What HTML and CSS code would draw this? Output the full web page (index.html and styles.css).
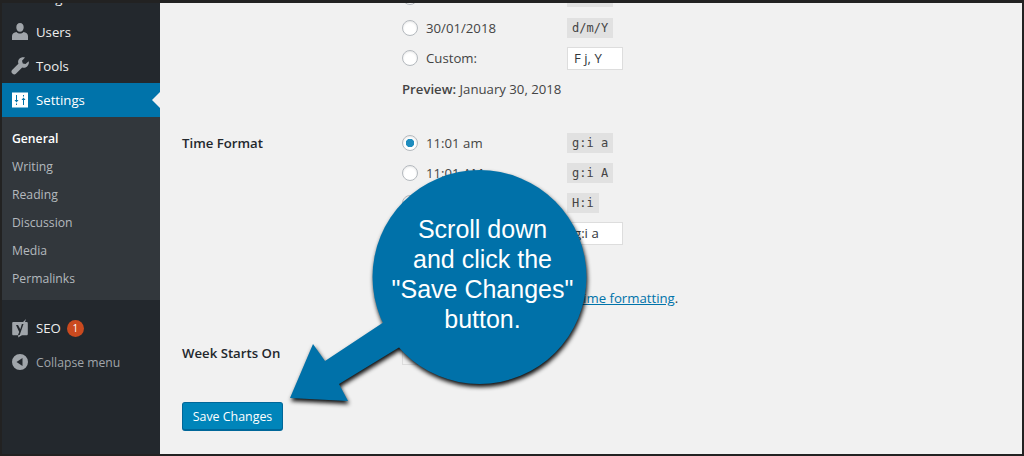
FILE: index.html
```html
<!DOCTYPE html>
<html lang="en">
<head>
  <meta name="viewport" content="width=device-width, initial-scale=1.0">
  <title>General Settings</title>
  <link rel="stylesheet" href="styles.css">
</head>
<body>
  <div class="frame">
    <nav class="sidebar">
      <a class="menu-item">
        <svg class="menu-icon" viewBox="0 0 20 20"><path d="M3 4l4-1 8 6 2 4-3 1-3-3-8-3z"/></svg>
        <span>Plugins</span>
      </a>
      <a class="menu-item">
        <svg class="menu-icon" viewBox="0 0 20 20"><path d="M10 1c2.300 0 3.700 1.800 3.700 4.200S12.300 9.800 10 9.800 6.300 7.600 6.300 5.200 7.700 1 10 1zM6.500 10c1 1 2.200 1.500 3.500 1.500s2.500-.5 3.500-1.500c2.500.5 4.500 1.700 4.500 4v4H2v-4c0-2.300 2-3.500 4.500-4z"/></svg>
        <span>Users</span>
      </a>
      <a class="menu-item">
        <svg class="menu-icon" viewBox="0 0 20 20"><path d="M18.700 5.200l-3.200 2.900-2.700-.7-.8-2.600L15 1.600c-2-.7-4.200-.3-5.600 1.200-1.300 1.300-1.600 3.200-1 4.900l-6.300 6.300c-.9.900-.9 2.300 0 3.200l.6.600c.9.900 2.300.9 3.200 0l6.300-6.300c1.700.6 3.600.2 4.900-1.100 1.400-1.400 2.200-3.300 1.600-5.200z"/></svg>
        <span>Tools</span>
      </a>
      <a class="menu-item menu-current">
        <svg class="menu-icon" viewBox="0 0 20 20"><path fill-rule="evenodd" d="M2 2.500h16v15H2zM6 5v5H4.500l2 2.500 2-2.500H7V5zM6 13.500V15h1v-1.500zM13 5v1.500h1V5zM13.500 7.500l-2 2.500H13v5h1v-5h1.500z"/></svg>
        <span>Settings</span>
      </a>
      <ul class="submenu">
        <li class="submenu-current">General</li>
        <li>Writing</li>
        <li>Reading</li>
        <li>Discussion</li>
        <li>Media</li>
        <li>Permalinks</li>
      </ul>
      <a class="menu-item menu-seo">
        <svg class="menu-icon" viewBox="0 0 20 20"><path fill-rule="evenodd" d="M3.500 4H13l3-3-1 3h1.500c.8 0 1.300.5 1.300 1.300V16c0 .8-.5 1.300-1.300 1.300H12L8 19.500l.5-2.200H3.500c-.8 0-1.300-.5-1.300-1.300V5.300C2.200 4.500 2.700 4 3.500 4zM6 7l3.200 7-1.200 3h1.700l3.800-11h-1.600l-1.600 5.300L8 7z"/></svg>
        <span>SEO</span>
        <span class="badge">1</span>
      </a>
      <a class="menu-item menu-collapse">
        <svg class="menu-icon" viewBox="0 0 20 20"><path fill-rule="evenodd" d="M10 2a8 8 0 1 1 0 16 8 8 0 0 1 0-16zM12.500 6l-6 4 6 4z"/></svg>
        <span>Collapse menu</span>
      </a>
    </nav>

    <main class="content">
      <div class="form-row date-row">
        <div class="form-label">Date Format</div>
        <div class="form-field">
          <label class="choice"><input type="radio"><span class="choice-text">01/30/2018</span><code>m/d/Y</code></label>
          <label class="choice"><input type="radio"><span class="choice-text">30/01/2018</span><code>d/m/Y</code></label>
          <label class="choice"><input type="radio"><span class="choice-text">Custom:</span><input class="small-text" type="text" value="F j, Y"></label>
          <p class="preview"><b>Preview:</b> January 30, 2018</p>
        </div>
      </div>

      <div class="form-row time-row">
        <div class="form-label">Time Format</div>
        <div class="form-field">
          <label class="choice"><input type="radio" checked><span class="choice-text">11:01 am</span><code>g:i a</code></label>
          <label class="choice"><input type="radio"><span class="choice-text">11:01 AM</span><code>g:i A</code></label>
          <label class="choice"><input type="radio"><span class="choice-text">11:01</span><code>H:i</code></label>
          <label class="choice"><input type="radio"><span class="choice-text">Custom:</span><input class="small-text" type="text" value="g:i a"></label>
          <p class="preview"><b>Preview:</b> 11:01 am</p>
          <p class="doc-link"><a>Documentation on date and time formatting</a>.</p>
        </div>
      </div>

      <div class="form-row week-row">
        <div class="form-label">Week Starts On</div>
        <div class="form-field"><span class="select-box"></span></div>
      </div>

      <button class="save-btn">Save Changes</button>
    </main>

    <div class="callout">
      <svg class="callout-shape" viewBox="0 0 1024 456">
        <g>
          <circle cx="479.500" cy="277" r="107"/>
          <path d="M313 344l12 17 62-41 16 25-64 39 9 17-58-3z"/>
        </g>
      </svg>
      <p class="callout-text">Scroll down<br>and click the<br>"Save Changes"<br>button.</p>
    </div>
  </div>
</body>
</html>
```

FILE: styles.css
```css
* {
  box-sizing: border-box;
}
html, body {
  margin: 0;
  height: 100%;
}
body {
  font-family: "Open Sans", sans-serif;
  font-size: 13.200px;
  color: #444;
  overflow: hidden;
}
.frame {
  position: relative;
  display: flex;
  width: 1024px;
  height: 456px;
  overflow: hidden;
  background-color: #f1f1f1;
  border: 2px solid #222;
  border-top-width: 3px;
}

/* sidebar */
.sidebar {
  width: 158px;
  flex: none;
  margin-top: -22px;
  background-color: #23282d;
  color: #eee;
}
.menu-item {
  display: flex;
  align-items: center;
  height: 34px;
  padding-left: 8px;
  gap: 6px;
}
.menu-icon {
  width: 20px;
  height: 20px;
  fill: #a0a5aa;
}
.menu-current {
  position: relative;
  background-color: #0073aa;
  color: #fff;
}
.menu-current .menu-icon {
  fill: #fff;
}
.menu-current::after {
  content: "";
  position: absolute;
  right: 0;
  top: 9px;
  border: 8px solid transparent;
  border-right-color: #f1f1f1;
  border-left-width: 0;
}
.submenu {
  list-style: none;
  margin: 0 0 11px;
  padding: 8px 0;
  height: 183px;
  background-color: #32373c;
  color: #b4b9be;
  font-size: 12.200px;
}
.submenu li {
  height: 28px;
  line-height: 28px;
  padding-left: 10px;
}
.submenu-current {
  color: #fff;
  font-weight: 600;
}
.badge {
  width: 17px;
  height: 17px;
  border-radius: 50%;
  background-color: #ca4a1f;
  color: #fff;
  font-size: 10px;
  line-height: 17px;
  text-align: center;
}
.menu-collapse {
  color: #a0a5aa;
  font-size: 12.200px;
}

/* settings form */
.content {
  flex: 1;
  margin-top: -21px;
  padding-left: 22px;
}
.form-row {
  display: grid;
  grid-template-columns: 220px 1fr;
}
.form-label {
  color: #23282d;
  font-weight: 600;
  line-height: 30px;
}
.date-row .form-label {
  visibility: hidden;
}
.choice {
  display: flex;
  align-items: center;
  height: 30.500px;
}
.time-row .choice {
  height: 30px;
}
.choice input[type="radio"] {
  appearance: none;
  width: 16px;
  height: 16px;
  margin: 0 8px 0 0;
  flex: none;
  background-color: #fff;
  border: 1px solid #b4b9be;
  border-radius: 50%;
  box-shadow: inset 0 1px 2px rgba(0, 0, 0, 0.1);
}
.choice input[type="radio"]:checked {
  background: radial-gradient(circle, #1e8cbe 0 4px, #fff 4.500px);
}
.choice-text {
  width: 141px;
}
code {
  padding: 3px 5px;
  background-color: #e1e1e1;
  color: #444;
  font-family: "DejaVu Sans Mono", monospace;
  font-size: 12px;
  line-height: 14px;
}
.small-text {
  width: 56px;
  height: 23px;
  padding: 0 6px;
  background-color: #fff;
  border: 1px solid #ddd;
  color: #32373c;
  font-family: inherit;
  font-size: 13.200px;
}
.preview {
  margin: 0;
  line-height: 30px;
}
.preview b {
  font-weight: 600;
}
.date-row {
  height: 146px;
}
.time-row {
  height: 210px;
}
.doc-link {
  margin: 5px 0 0;
  line-height: 30px;
}
.doc-link a {
  color: #0073aa;
  text-decoration: underline;
}
.week-row {
  height: 64px;
}
.select-box {
  display: block;
  width: 90px;
  height: 22px;
  margin-top: 5px;
  border: 1px solid #ddd;
}
.save-btn {
  display: block;
  width: 101px;
  height: 29px;
  padding: 0;
  background-color: #0085ba;
  border: 1px solid #006799;
  border-bottom-width: 2px;
  border-radius: 3px;
  color: #fff;
  font-family: inherit;
  font-size: 12.400px;
}

/* tutorial annotation on top of the screenshot */
.callout {
  position: absolute;
  left: -2px;
  top: -3px;
  width: 1024px;
  height: 456px;
}
.callout-shape {
  display: block;
  width: 1024px;
  height: 456px;
  fill: #0071a9;
  filter: drop-shadow(1px 3px 2px rgba(0, 0, 0, 0.95));
}
.callout-text {
  position: absolute;
  left: 375px;
  top: 214px;
  width: 215px;
  margin: 0;
  color: #fff;
  font-family: "Liberation Sans", sans-serif;
  font-size: 25px;
  line-height: 30px;
  text-align: center;
}
```
